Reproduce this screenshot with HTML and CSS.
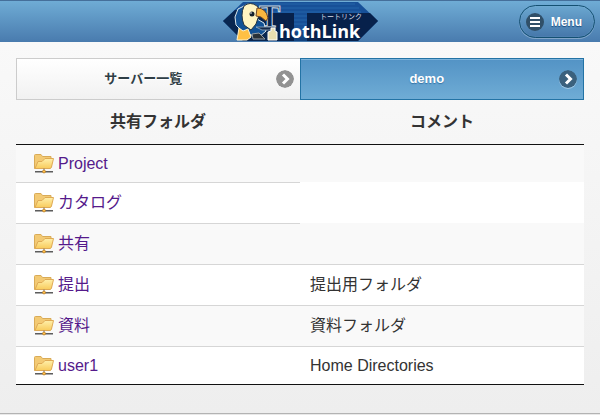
FILE: index.html
```html
<!DOCTYPE html>
<html lang="ja">
<head>
  <meta charset="UTF-8">
  <meta name="viewport" content="width=device-width, initial-scale=1">
  <title>ThothLink</title>
  <link rel="stylesheet" href="styles.css">
</head>
<body>
  <!-- shared icons -->
  <svg class="defs" aria-hidden="true">
    <defs>
      <linearGradient id="folderFill" x1="0" y1="0" x2="0" y2="1">
        <stop offset="0" stop-color="#fff0ab"/>
        <stop offset="1" stop-color="#f8cb5c"/>
      </linearGradient>
      <symbol id="folder" viewBox="0 0 20 20">
        <path d="M.5 14.500V1.500Q.5.500 1.500.500h5.500l1.500 2h8.500v11z" fill="#f3ca74" stroke="#d9ab57"/>
        <path d="M1 14.500L4 7.500h4l3-3h8.500l-2 8.500-1 1.500z" fill="url(#folderFill)" stroke="#dfaa55"/>
        <path d="M1 17.500h18" stroke="#5d5d5d"/>
        <path d="M1 18.500h18" stroke="#aaa"/>
        <path d="M10 14.500v3" stroke="#777"/>
        <circle cx="10" cy="17.500" r="1.500" fill="#ffc04a" stroke="#ad6b16" stroke-width=".6"/>
      </symbol>
      <symbol id="arrow" viewBox="0 0 18 18">
        <circle cx="9" cy="9" r="9"/>
        <path d="M7 4.500L11.500 9 7 13.500" fill="none" stroke="#fff" stroke-width="3"/>
      </symbol>
    </defs>
  </svg>

  <header class="header">
    <a class="logo" href="#">
      <svg width="155" height="41" viewBox="0 0 155 41" role="img" aria-label="ThothLink">
        <path d="M0 20L20 1h115l20 19-20 20H20z" fill="#175098"/>
        <path d="M23 3h109M20 7h116M17 11h121M71 15h13M71 19h13M71 23h13" stroke="#2465a9"/>
        <path d="M44 12h27v28H44zM84 12h63l8 8-20 20H84z" fill="#07214b"/>
        <path d="M12 9L0 20l20 20h30V12z" fill="#092650"/>
        <path d="M71 31h13v9H71z" fill="#124380"/>
        <text x="36" y="26" class="logo-t">T</text>
        <path d="M15 8l-3 8 1 8 6 6 16 7 8-7-2-8-7-4V5l-9-2z" fill="#125195" stroke="#dce8ed"/>
        <path d="M21 5q6-5 13 0 6 6 1 12l-2 6-5 6-7-5q-4-10 0-19z" fill="#fff4c2" stroke="#243340"/>
        <path d="M34 7q9 0 11 10l-2 3-5-4-5-1z" fill="#f9b63f" stroke="#6d4729"/>
        <circle cx="29" cy="13" r="2.500" fill="#14212e"/>
        <circle cx="28" cy="12" r=".8" fill="#fff"/>
        <path d="M16 27l4 3 5-2 3 8-4 3H14z" fill="#ffc044" stroke="#fff3cd"/>
        <path d="M29 33l7-1 6 6H30z" fill="#283038" stroke="#949ba0"/>
        <path d="M33 26h19v3H39z" fill="#152a4c" stroke="#a9bfd0" stroke-width=".7"/>
        <path d="M48 27h4v3l2 1v8h-9v-8l3-1z" fill="#e9deb0" stroke="#fff"/>
        <text x="56" y="37" class="logo-name">hothLink</text>
        <text x="97" y="18" class="logo-kana">トートリンク</text>
      </svg>
    </a>
    <button class="menu-btn" type="button">
      <svg width="18" height="18" viewBox="0 0 18 18" aria-hidden="true">
        <circle cx="9" cy="9" r="9" fill="#304f68"/>
        <path d="M4 5h10M4 9h10M4 13h10" stroke="#fff" stroke-width="2"/>
      </svg>
      Menu
    </button>
  </header>

  <main class="content">
    <nav class="tabs">
      <a class="tab" href="#"><span>サーバー一覧</span><svg class="tab-icon"><use href="#arrow"/></svg></a>
      <a class="tab active" href="#"><span>demo</span><svg class="tab-icon"><use href="#arrow"/></svg></a>
    </nav>

    <table class="shares">
      <thead>
        <tr><th>共有フォルダ</th><th>コメント</th></tr>
      </thead>
      <tbody>
        <tr><td><a href="#"><svg class="folder"><use href="#folder"/></svg>Project</a></td><td></td></tr>
        <tr class="ja"><td><a href="#"><svg class="folder"><use href="#folder"/></svg>カタログ</a></td><td></td></tr>
        <tr class="ja"><td><a href="#"><svg class="folder"><use href="#folder"/></svg>共有</a></td><td></td></tr>
        <tr class="ja"><td><a href="#"><svg class="folder"><use href="#folder"/></svg>提出</a></td><td>提出用フォルダ</td></tr>
        <tr class="ja"><td><a href="#"><svg class="folder"><use href="#folder"/></svg>資料</a></td><td>資料フォルダ</td></tr>
        <tr><td><a href="#"><svg class="folder"><use href="#folder"/></svg>user1</a></td><td>Home Directories</td></tr>
      </tbody>
    </table>
  </main>
  <footer class="footer"></footer>
</body>
</html>
```
FILE: styles.css
```css
* {
  box-sizing: border-box;
}

body {
  margin: 0;
  min-height: 100vh;
  display: flex;
  flex-direction: column;
  background: #e9e9e9;
  color: #333;
  font-family: "Liberation Sans", Helvetica, Arial, "Noto Sans CJK JP", sans-serif;
  font-size: 16px;
  line-height: 20px;
}

.defs {
  position: absolute;
  width: 0;
  height: 0;
}

/* header */
.header {
  display: grid;
  grid-template-columns: 1fr auto 1fr;
  align-items: center;
  height: 42px;
  padding: 0 5px;
  border-top: 1px solid #456f9a;
  background: linear-gradient(#6facd5, #497bae);
}

.logo {
  grid-column: 2;
  display: block;
  height: 41px;
}

.logo-t {
  font: bold 32px "Liberation Serif", serif;
  fill: #0b2853;
  stroke: #c9d9e5;
  stroke-width: 1px;
}

.logo-name {
  font: bold 18px "Open Sans", sans-serif;
  fill: #fff;
}

.logo-kana {
  font: 7px "Noto Sans CJK JP", sans-serif;
  fill: #d5dce7;
}

.menu-btn {
  justify-self: end;
  display: flex;
  align-items: center;
  gap: 7px;
  height: 33px;
  padding: 0 12px 0 6px;
  border: 1px solid #145072;
  border-radius: 17px;
  background: linear-gradient(#6ba7d0, #4577aa);
  box-shadow: inset 0 0 1px #8fc0e0, 0 1px 0 rgba(255, 255, 255, 0.3);
  color: #fff;
  font-family: inherit;
  font-size: 12px;
  font-weight: bold;
  text-shadow: 0 1px 1px #194b7e;
  cursor: pointer;
}

/* content */
.content {
  flex: 1;
  padding: 16px;
  background: linear-gradient(#f9f9f9, #eee);
}

.tabs {
  display: flex;
}

.tab {
  position: relative;
  flex: 1;
  height: 42px;
  padding: 0 40px 0 10px;
  border: 1px solid #ccc;
  border-right: none;
  background: linear-gradient(#fff, #f1f1f1);
  color: #2f3e46;
  font-size: 13px;
  font-weight: bold;
  line-height: 40px;
  text-align: center;
  text-decoration: none;
  text-shadow: 0 1px 0 #fff;
}

.tab.active {
  border: 1px solid #2373a5;
  background: linear-gradient(#5393c5, #6facd5);
  box-shadow: inset 0 1px 0 #7db4dc;
  color: #fff;
  text-shadow: 0 1px 1px #3373a5;
}

.tab-icon {
  position: absolute;
  top: 11px;
  right: 6px;
  width: 18px;
  height: 18px;
  border-radius: 9px;
  fill: #929292;
}

.active .tab-icon {
  fill: #3b617d;
  box-shadow: 0 1px 0 rgba(255, 255, 255, 0.4);
}

.shares {
  width: 100%;
  table-layout: fixed;
  border-spacing: 0;
  border-bottom: 1px solid #111;
  empty-cells: hide;
}

.shares th {
  height: 45px;
  padding: 0 0 1px;
  border-bottom: 1px solid #111;
}

.shares td {
  height: 38px;
  padding: 0 10px;
  border-top: 1px solid #d6d6d6;
}

.shares .ja td {
  height: 41px;
}

.shares tbody tr {
  background: #fff;
}

.shares tbody tr:nth-child(odd) {
  background: #f9f9f9;
}

.shares tbody tr:first-child td {
  height: 37px;
  border-top: none;
}

.shares td:empty {
  border-top: none;
}

.shares td:first-child {
  padding-left: 18px;
}

.shares a {
  display: flex;
  align-items: center;
  gap: 4px;
  color: #551a8b;
  text-decoration: none;
}

.folder {
  width: 20px;
  height: 20px;
}

/* footer */
.footer {
  height: 2px;
  border-top: 1px solid #b3b3b3;
}
```
